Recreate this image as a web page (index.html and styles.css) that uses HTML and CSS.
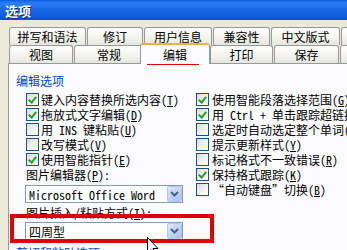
FILE: index.html
```html
<!DOCTYPE html>
<html>
  <head>
    <title>选项</title>
    <link rel="stylesheet" href="styles.css">
  </head>
  <body>
    <div class="dialog">
      <div class="titlebar"><span class="title">选项</span></div>

      <div class="body">
        <div class="tab-row back">
          <span class="tab w-spell">拼写和语法</span
          ><span class="tab w-track">修订</span
          ><span class="tab w-user">用户信息</span
          ><span class="tab w-compat">兼容性</span
          ><span class="tab w-cn">中文版式</span
          ><span class="tab w-files">文件位置</span>
        </div>
        <div class="tab-row front">
          <span class="tab w-view">视图</span
          ><span class="tab w-general">常规</span
          ><span class="tab selected">编辑</span
          ><span class="tab w-print">打印</span
          ><span class="tab w-save">保存</span
          ><span class="tab w-sec">安全性</span>
        </div>

        <div class="page">
          <div class="group-title">编辑选项</div>
          <div class="columns">
            <div class="col left">
              <div class="check"><span class="box on"></span>键入内容替换所选内容(<u>T</u>)</div>
              <div class="check"><span class="box on"></span>拖放式文字编辑(<u>D</u>)</div>
              <div class="check"><span class="box"></span>用 INS 键粘贴(<u>U</u>)</div>
              <div class="check"><span class="box"></span>改写模式(<u>V</u>)</div>
              <div class="check"><span class="box on"></span>使用智能指针(<u>E</u>)</div>

              <div class="field-label">图片编辑器(<u>P</u>):</div>
              <div class="combo">
                <span class="combo-text">Microsoft Office Word</span>
                <span class="combo-btn">
                  <svg width="9" height="6" viewBox="0 0 9 6"><path d="M1 1 L4.5 4.5 L8 1" fill="none" stroke="#4d6185" stroke-width="2"/></svg>
                </span>
              </div>

              <div class="field-label second">图片插入/粘贴方式(<u>I</u>):</div>
              <div class="combo">
                <span class="combo-text">四周型</span>
                <span class="combo-btn">
                  <svg width="9" height="6" viewBox="0 0 9 6"><path d="M1 1 L4.5 4.5 L8 1" fill="none" stroke="#4d6185" stroke-width="2"/></svg>
                </span>
              </div>
            </div>

            <div class="col right">
              <div class="check"><span class="box on"></span>使用智能段落选择范围(<u>G</u>)</div>
              <div class="check"><span class="box on"></span>用 Ctrl + 单击跟踪超链接(<u>H</u>)</div>
              <div class="check"><span class="box"></span>选定时自动选定整个单词(<u>W</u>)</div>
              <div class="check"><span class="box"></span>提示更新样式(<u>Y</u>)</div>
              <div class="check"><span class="box"></span>标记格式不一致错误(<u>R</u>)</div>
              <div class="check"><span class="box on"></span>保持格式跟踪(<u>K</u>)</div>
              <div class="check"><span class="box"></span>“自动键盘”切换(<u>B</u>)</div>
            </div>
          </div>
          <div class="group-title next">剪切和粘贴选项</div>
        </div>
      </div>

      <div class="mark mark-tab"></div>
      <div class="mark mark-combo"></div>
      <svg class="cursor" width="12" height="20" viewBox="0 0 12 20">
        <path d="M0.5 0.5 L0.5 16 L4 12.5 L6.5 18.5 L8.5 17.5 L6 11.5 L11 11.5 Z" fill="#fff" stroke="#000" stroke-width="1"/>
      </svg>
    </div>
  </body>
</html>
```

FILE: styles.css
```css
html,
body {
  margin: 0;
}

body {
  width: 347px;
  height: 250px;
  overflow: hidden;
  background: #ece9d8;
  color: #000;
  font-family: "Noto Sans Mono CJK SC", "Noto Sans CJK SC", monospace;
  font-size: 12px;
}

u {
  text-decoration: underline;
}

.dialog {
  position: relative;
  width: 440px;
  height: 250px;
}

.titlebar {
  height: 20px;
  padding-left: 5px;
  display: flex;
  align-items: center;
  background: linear-gradient(
    #0b5de0 0%,
    #2c7ef2 15%,
    #1d6deb 40%,
    #0f5cdc 80%,
    #0a50cb 100%
  );
}

.title {
  color: #fff;
  font-size: 13px;
  font-weight: bold;
  text-shadow: 1px 1px 0 #0a2a8a;
}

.body {
  padding: 7px 0 0 8px;
}

/* tabs */

.tab-row {
  display: flex;
  height: 18px;
  padding-left: 1px;
}

.tab {
  box-sizing: border-box;
  flex: none;
  height: 18px;
  margin-right: 1px;
  border: 1px solid #919b9c;
  border-bottom: none;
  border-radius: 3px 3px 0 0;
  background: linear-gradient(#ffffff, #f3f2ec 60%, #e6e5de);
  text-align: center;
  line-height: 17px;
  white-space: nowrap;
}

.w-spell { width: 77px; }
.w-track { width: 56px; }
.w-user { width: 68px; }
.w-compat { width: 57px; }
.w-cn { width: 69px; }
.w-files { width: 70px; }

.w-view { width: 64px; }
.w-general { width: 70px; }
.w-print { width: 63px; }
.w-save { width: 65px; }
.w-sec { width: 70px; }

.tab.selected {
  position: relative;
  z-index: 2;
  width: 70px;
  height: 21px;
  margin: -2px 0 0 -5px;
  border-top: 2px solid #f2b043;
  background: #fcfcfe;
  line-height: 19px;
}

/* page */

.page {
  box-sizing: border-box;
  height: 220px;
  margin-right: 0;
  padding: 10px 0 0 7px;
  border: 1px solid #919b9c;
  background: #fcfcfe;
}

.group-title {
  color: #0046d5;
  line-height: 14px;
}

.group-title.next {
  margin-top: 6px;
}

.columns {
  display: flex;
  margin: 4px 0 0 10px;
}

.col.left {
  width: 170px;
}

.check {
  display: flex;
  align-items: center;
  height: 15px;
  white-space: nowrap;
}

.box {
  position: relative;
  box-sizing: border-box;
  flex: none;
  width: 13px;
  height: 13px;
  margin-right: 2px;
  border: 1px solid #1c5180;
  background: linear-gradient(135deg, #dcdcd7, #f4f4f0 60%, #ffffff);
}

.box.on::after {
  content: "";
  position: absolute;
  left: 3px;
  top: 1px;
  width: 3px;
  height: 6px;
  border: solid #21a121;
  border-width: 0 2px 2px 0;
  transform: rotate(40deg);
}

.col.right .box {
  margin-right: 3px;
}

.field-label {
  height: 15px;
  line-height: 15px;
  white-space: nowrap;
}

.combo {
  box-sizing: border-box;
  display: flex;
  align-items: center;
  justify-content: space-between;
  width: 158px;
  height: 18px;
  margin: 3px 0 0 -1px;
  padding: 0 0 0 3px;
  border: 1px solid #7f9db9;
  background: #fff;
}

.field-label.second {
  margin-top: 2px;
}

.field-label.second + .combo {
  margin-top: 2px;
}

.combo-text {
  white-space: nowrap;
}

.combo-btn {
  box-sizing: border-box;
  display: flex;
  align-items: center;
  justify-content: center;
  width: 15px;
  height: 16px;
  border: 1px solid #b4c8f6;
  border-radius: 2px;
  background: linear-gradient(135deg, #dde7fd, #bccff9 60%, #a9c0f3);
}

/* overlays */

.mark {
  position: absolute;
  box-sizing: border-box;
  border: 3px solid #e10000;
}

.mark-tab {
  left: 147px;
  top: 48px;
  width: 52px;
  height: 17px;
}

.mark-combo {
  left: 10px;
  top: 214px;
  width: 204px;
  height: 29px;
  border-width: 4px;
}

.cursor {
  position: absolute;
  left: 147px;
  top: 237px;
}
```
